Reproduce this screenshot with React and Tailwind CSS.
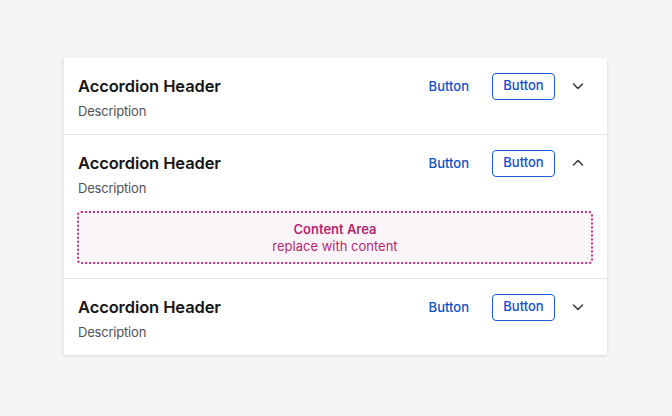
import React from "react";

function Chevron({ up }) {
  return (
    <svg width="16" height="16" viewBox="0 0 16 16" fill="none" className="text-[#393939]">
      {up ? (
        <path d="M3.5 10L8 5.5L12.5 10" stroke="currentColor" strokeWidth="1.5" strokeLinecap="round" strokeLinejoin="round" />
      ) : (
        <path d="M3.5 6L8 10.5L12.5 6" stroke="currentColor" strokeWidth="1.5" strokeLinecap="round" strokeLinejoin="round" />
      )}
    </svg>
  );
}

function Row({ open, last }) {
  return (
    <div className={`pl-[14px] pr-[21px] pt-[16px] ${open ? "pb-[14px]" : "pb-[13px]"} ${last ? "" : "border-b border-[#e4e4e7]"}`}>
      <div className="flex items-start">
        <div className="flex-1 flex flex-col">
          <div className="text-[16.5px] leading-[24px] font-semibold tracking-[-0.1px] text-[#161616]">Accordion Header</div>
          <div className="mt-[3px] text-[13px] leading-[20px] tracking-[-0.2px] text-[#525252]">Description</div>
        </div>
        <div className="flex items-center h-[24px]">
          <button className="px-[12px] text-[13px] leading-[20px] font-medium text-[#0f4fd1]">Button</button>
          <button className="ml-[11px] w-[63px] h-[27px] rounded-[4px] border border-[#1d5ad8] text-[13px] font-medium text-[#0f4fd1]">Button</button>
          <span className="ml-[15px] flex"><Chevron up={open} /></span>
        </div>
      </div>
      {open && (
        <div className="mt-[13px] ml-[-1px] mr-[-7px] h-[53px] rounded-[4px] border-2 border-dotted border-[#c2357f] bg-[#fbf5fa] flex flex-col items-center justify-center">
          <div className="text-[13px] leading-[17px] font-semibold text-[#b5276f]">Content Area</div>
          <div className="text-[13px] leading-[17px] text-[#b5276f]">replace with content</div>
        </div>
      )}
    </div>
  );
}

export default function App() {
  return (
    <div className="w-[672px] h-[416px] bg-[#f4f5f7] pt-[58px] pl-[63px]" style={{ fontFamily: "Inter, 'Noto Sans', sans-serif" }}>
      <div className="w-[544px] bg-white shadow-[0_1px_3px_rgba(0,0,0,0.12)] border-l border-[#ececef]">
        <Row />
        <Row open />
        <Row last />
      </div>
    </div>
  );
}
